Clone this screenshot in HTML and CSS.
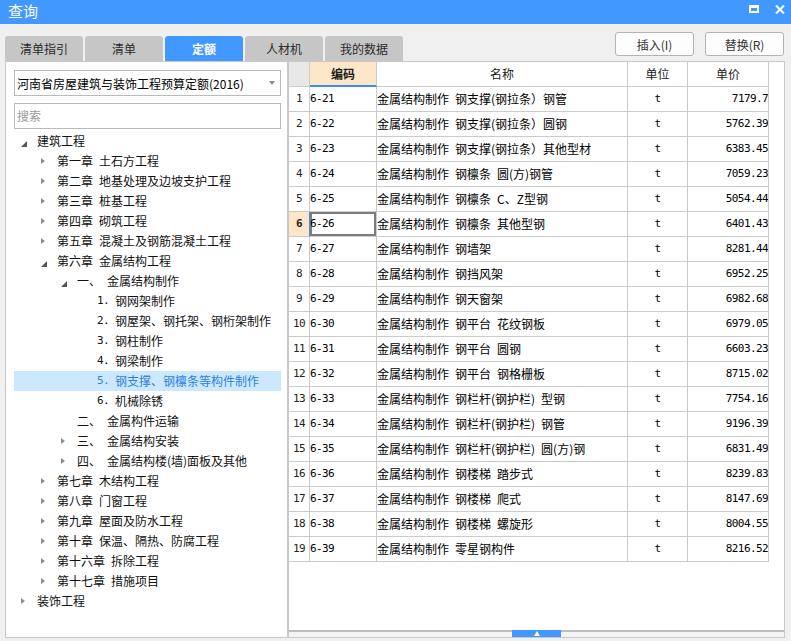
FILE: index.html
```html
<!DOCTYPE html>
<html lang="zh-CN">
<head>
<meta charset="utf-8">
<title>查询</title>
<link rel="stylesheet" href="styles.css">
</head>
<body>
<div class="window">
  <div class="titlebar">
    <span class="title">查询</span>
    <div class="winctl">
      <span class="ico-max"></span>
      <svg class="ico-close" width="10" height="9" viewBox="0 0 10 9"><path d="M1 0.5L9 8.5M9 0.5L1 8.5" stroke="#fff" stroke-width="2"/></svg>
    </div>
  </div>
  <div class="toolbar">
    <div class="tabs">
      <div class="tab">清单指引</div>
      <div class="tab">清单</div>
      <div class="tab active">定额</div>
      <div class="tab">人材机</div>
      <div class="tab">我的数据</div>
    </div>
    <div class="actions">
      <button class="btn">插入(I)</button>
      <button class="btn">替换(R)</button>
    </div>
  </div>
  <div class="content">
    <div class="left">
      <div class="select"><span>河南省房屋建筑与装饰工程预算定额(2016)</span><span class="caret"></span></div>
      <div class="search">搜索</div>
      <ul class="tree">
        <li class="l0"><span class="arr e"></span>建筑工程</li>
        <li class="l1"><span class="arr c"></span>第一章&ensp;土石方工程</li>
        <li class="l1"><span class="arr c"></span>第二章&ensp;地基处理及边坡支护工程</li>
        <li class="l1"><span class="arr c"></span>第三章&ensp;桩基工程</li>
        <li class="l1"><span class="arr c"></span>第四章&ensp;砌筑工程</li>
        <li class="l1"><span class="arr c"></span>第五章&ensp;混凝土及钢筋混凝土工程</li>
        <li class="l1"><span class="arr e"></span>第六章&ensp;金属结构工程</li>
        <li class="l2"><span class="arr e"></span><span class="ord">一、</span>金属结构制作</li>
        <li class="l3"><span class="arr"></span><span class="num">1.</span>钢网架制作</li>
        <li class="l3"><span class="arr"></span><span class="num">2.</span>钢屋架、钢托架、钢桁架制作</li>
        <li class="l3"><span class="arr"></span><span class="num">3.</span>钢柱制作</li>
        <li class="l3"><span class="arr"></span><span class="num">4.</span>钢梁制作</li>
        <li class="l3 sel"><span class="arr"></span><span class="num">5.</span>钢支撑、钢檩条等构件制作</li>
        <li class="l3"><span class="arr"></span><span class="num">6.</span>机械除锈</li>
        <li class="l2"><span class="arr"></span><span class="ord">二、</span>金属构件运输</li>
        <li class="l2"><span class="arr c"></span><span class="ord">三、</span>金属结构安装</li>
        <li class="l2"><span class="arr c"></span><span class="ord">四、</span>金属结构楼(墙)面板及其他</li>
        <li class="l1"><span class="arr c"></span>第七章&ensp;木结构工程</li>
        <li class="l1"><span class="arr c"></span>第八章&ensp;门窗工程</li>
        <li class="l1"><span class="arr c"></span>第九章&ensp;屋面及防水工程</li>
        <li class="l1"><span class="arr c"></span>第十章&ensp;保温、隔热、防腐工程</li>
        <li class="l1"><span class="arr c"></span>第十六章&ensp;拆除工程</li>
        <li class="l1"><span class="arr c"></span>第十七章&ensp;措施项目</li>
        <li class="l0"><span class="arr c"></span>装饰工程</li>
      </ul>
    </div>
    <div class="right">
      <div class="grid-wrap">
        <table class="grid">
          <colgroup><col class="w-rn"><col class="w-code"><col class="w-name"><col class="w-unit"><col class="w-price"></colgroup>
          <thead>
            <tr><th class="corner"></th><th class="hsel">编码</th><th>名称</th><th>单位</th><th>单价</th></tr>
          </thead>
          <tbody>
            <tr><td class="rn">1</td><td class="code">6-21</td><td class="name">金属结构制作&ensp;钢支撑(钢拉条）钢管</td><td class="unit">t</td><td class="price">7179.7</td></tr>
            <tr><td class="rn">2</td><td class="code">6-22</td><td class="name">金属结构制作&ensp;钢支撑(钢拉条）圆钢</td><td class="unit">t</td><td class="price">5762.39</td></tr>
            <tr><td class="rn">3</td><td class="code">6-23</td><td class="name">金属结构制作&ensp;钢支撑(钢拉条）其他型材</td><td class="unit">t</td><td class="price">6383.45</td></tr>
            <tr><td class="rn">4</td><td class="code">6-24</td><td class="name">金属结构制作&ensp;钢檩条&ensp;圆(方)钢管</td><td class="unit">t</td><td class="price">7059.23</td></tr>
            <tr><td class="rn">5</td><td class="code">6-25</td><td class="name">金属结构制作&ensp;钢檩条&ensp;C、Z型钢</td><td class="unit">t</td><td class="price">5054.44</td></tr>
            <tr><td class="rn cur">6</td><td class="code sel">6-26</td><td class="name">金属结构制作&ensp;钢檩条&ensp;其他型钢</td><td class="unit">t</td><td class="price">6401.43</td></tr>
            <tr><td class="rn">7</td><td class="code">6-27</td><td class="name">金属结构制作&ensp;钢墙架</td><td class="unit">t</td><td class="price">8281.44</td></tr>
            <tr><td class="rn">8</td><td class="code">6-28</td><td class="name">金属结构制作&ensp;钢挡风架</td><td class="unit">t</td><td class="price">6952.25</td></tr>
            <tr><td class="rn">9</td><td class="code">6-29</td><td class="name">金属结构制作&ensp;钢天窗架</td><td class="unit">t</td><td class="price">6982.68</td></tr>
            <tr><td class="rn">10</td><td class="code">6-30</td><td class="name">金属结构制作&ensp;钢平台&ensp;花纹钢板</td><td class="unit">t</td><td class="price">6979.05</td></tr>
            <tr><td class="rn">11</td><td class="code">6-31</td><td class="name">金属结构制作&ensp;钢平台&ensp;圆钢</td><td class="unit">t</td><td class="price">6603.23</td></tr>
            <tr><td class="rn">12</td><td class="code">6-32</td><td class="name">金属结构制作&ensp;钢平台&ensp;钢格栅板</td><td class="unit">t</td><td class="price">8715.02</td></tr>
            <tr><td class="rn">13</td><td class="code">6-33</td><td class="name">金属结构制作&ensp;钢栏杆(钢护栏)&ensp;型钢</td><td class="unit">t</td><td class="price">7754.16</td></tr>
            <tr><td class="rn">14</td><td class="code">6-34</td><td class="name">金属结构制作&ensp;钢栏杆(钢护栏)&ensp;钢管</td><td class="unit">t</td><td class="price">9196.39</td></tr>
            <tr><td class="rn">15</td><td class="code">6-35</td><td class="name">金属结构制作&ensp;钢栏杆(钢护栏)&ensp;圆(方)钢</td><td class="unit">t</td><td class="price">6831.49</td></tr>
            <tr><td class="rn">16</td><td class="code">6-36</td><td class="name">金属结构制作&ensp;钢楼梯&ensp;踏步式</td><td class="unit">t</td><td class="price">8239.83</td></tr>
            <tr><td class="rn">17</td><td class="code">6-37</td><td class="name">金属结构制作&ensp;钢楼梯&ensp;爬式</td><td class="unit">t</td><td class="price">8147.69</td></tr>
            <tr><td class="rn">18</td><td class="code">6-38</td><td class="name">金属结构制作&ensp;钢楼梯&ensp;螺旋形</td><td class="unit">t</td><td class="price">8004.55</td></tr>
            <tr><td class="rn">19</td><td class="code">6-39</td><td class="name">金属结构制作&ensp;零星钢构件</td><td class="unit">t</td><td class="price">8216.52</td></tr>
          </tbody>
        </table>
      </div>
      <div class="splitter"><span class="grip"></span></div>
    </div>
  </div>
</div>
</body>
</html>
```
FILE: styles.css
```css
* { box-sizing: border-box; }
html, body { margin: 0; padding: 0; }
body {
  width: 791px;
  height: 641px;
  overflow: hidden;
  background: #f0f0f0;
  font-family: "Noto Sans CJK SC", "Microsoft YaHei", sans-serif;
  font-size: 12px;
  color: #000;
}
.window { width: 791px; height: 641px; display: flex; flex-direction: column; }

/* title bar */
.titlebar {
  height: 24px;
  flex: none;
  background: #4198fe;
  display: flex;
  align-items: flex-start;
  justify-content: space-between;
  padding: 0 6px 0 8px;
}
.title { color: #fff; font-size: 15px; line-height: 22px; }
.winctl { display: flex; align-items: flex-start; gap: 16px; padding-top: 5px; }
.ico-max { display: block; width: 10px; height: 8px; border: 2px solid #fff; border-top-width: 3px; }
.ico-close { display: block; }

/* toolbar with tabs and buttons */
.toolbar { height: 37px; flex: none; display: flex; padding: 0 7px 0 5px; }
.tabs { display: flex; gap: 2px; align-self: flex-end; }
.tab {
  width: 78px;
  height: 25px;
  line-height: 25px;
  text-align: center;
  background: #c6c6c6;
  border-radius: 3px 3px 0 0;
  color: #2a2a2a;
}
.tab.active { background: #4198fe; color: #fff; font-weight: bold; }
.actions { margin-left: auto; display: flex; gap: 11px; padding-top: 8px; }
.btn {
  width: 79px;
  height: 24px;
  padding: 0;
  border: 1px solid #b3b3b3;
  border-radius: 3px;
  background: #fdfdfd;
  font: 12px "Noto Sans CJK SC", sans-serif;
  color: #333;
}

/* content */
.content { height: 577px; flex: none; display: flex; padding: 0 6px 0 5px; }

.left {
  width: 283px;
  flex: none;
  background: #fff;
  border: 1px solid #c8c8c8;
  padding: 8px 6px 0 8px;
  display: flex;
  flex-direction: column;
}
.select {
  height: 26px;
  flex: none;
  border: 1px solid #bababa;
  display: flex;
  align-items: center;
  justify-content: space-between;
  padding: 0 5px 0 2px;
  white-space: nowrap;
}
.caret {
  width: 0;
  height: 0;
  border-left: 3.5px solid transparent;
  border-right: 3.5px solid transparent;
  border-top: 4px solid #8a8a8a;
}
.search {
  margin-top: 7px;
  height: 26px;
  flex: none;
  border: 1px solid #bababa;
  padding-left: 2px;
  line-height: 24px;
  color: #9a9a9a;
}
.tree { list-style: none; margin: 2px 0 0; padding: 0; }
.tree li {
  height: 20px;
  line-height: 20px;
  display: flex;
  align-items: flex-start;
  white-space: nowrap;
  color: #111;
}
.tree .l0 { padding-left: 6px; }
.tree .l1 { padding-left: 26px; }
.tree .l2 { padding-left: 46px; }
.tree .l3 { padding-left: 66px; }
.tree li.sel { background: #cce8ff; color: #2d7fde; }
.arr { width: 17px; height: 20px; flex: none; display: block; }
.arr.c::before {
  content: "";
  display: block;
  width: 0;
  height: 0;
  margin: 7px 0 0 1px;
  border-left: 4px solid #8c8c8c;
  border-top: 3.5px solid transparent;
  border-bottom: 3.5px solid transparent;
}
.arr.e::before {
  content: "";
  display: block;
  width: 0;
  height: 0;
  margin: 10px 0 0 1px;
  border-bottom: 6px solid #555;
  border-left: 6px solid transparent;
}
.ord { width: 30px; flex: none; }
.num {
  width: 18px;
  flex: none;
  font-family: "DejaVu Sans Mono", monospace;
  font-size: 11px;
  letter-spacing: -0.6px;
}

/* right grid panel */
.right {
  width: 497px;
  flex: none;
  background: #fff;
  border: 1px solid #c8c8c8;
  display: flex;
  flex-direction: column;
}
.grid-wrap { flex: 1; overflow: hidden; }
.grid { border-collapse: separate; border-spacing: 0; table-layout: fixed; width: 480px; }
.w-rn { width: 21px; }
.w-code { width: 67px; }
.w-name { width: 251px; }
.w-unit { width: 60px; }
.w-price { width: 81px; }
.grid th, .grid td {
  padding: 0;
  border-right: 1px solid #cbcbcb;
  border-bottom: 1px solid #cbcbcb;
  line-height: 24px;
  white-space: nowrap;
  overflow: hidden;
}
.grid th { font-weight: normal; text-align: center; color: #1a1a1a; }
.grid th.corner { background: #e8e8e8; }
.grid th.hsel {
  background: #fee6c9;
  font-weight: bold;
  border-bottom: 2px solid #3a8ef0;
  line-height: 23px;
}
.rn, .code, .unit, .price {
  font-family: "DejaVu Sans Mono", monospace;
  font-size: 11px;
  letter-spacing: -0.6px;
}
.rn { text-align: center; color: #222; }
.rn.cur { background: #fee6c9; font-weight: bold; border-right-color: #3a8ef0; }
.code { padding-left: 1px; }
.code.sel { box-shadow: inset 0 0 0 2px #7d7d7d; }
.name { padding-left: 1px; }
.unit { text-align: center; }
.price { text-align: right; padding-right: 3px; }

.splitter {
  flex: none;
  height: 7px;
  border-top: 2px solid #bdbdbd;
  background: #f4f4f4;
  display: flex;
  justify-content: center;
}
.grip {
  width: 49px;
  height: 7px;
  margin-top: -2px;
  background: #4198fe;
  display: flex;
  justify-content: center;
  align-items: center;
}
.grip::before {
  content: "";
  width: 0;
  height: 0;
  border-left: 3px solid transparent;
  border-right: 3px solid transparent;
  border-bottom: 5px solid #fff;
}
```
